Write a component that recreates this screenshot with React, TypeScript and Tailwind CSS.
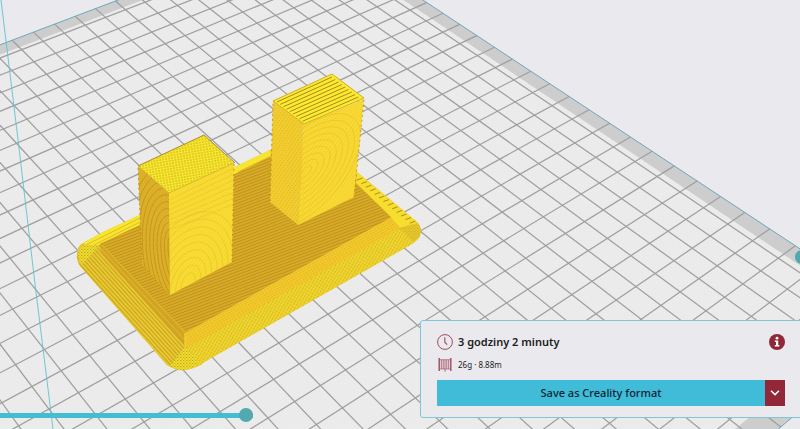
import React, { useState } from "react";

// perspective projection of the build plate, one unit per grid cell
const project = (u: number, v: number) => {
  const w = 1 - 0.0094 * u - 0.01209 * v;
  const x = (426.2 - 21 * u + 11.3 * v) / w;
  const y = (21 + 7.54 * u + 10.83 * v) / w;
  return `${x.toFixed(1)},${y.toFixed(1)}`;
};

const quad = (u1: number, v1: number, u2: number, v2: number) =>
  [project(u1, v1), project(u2, v1), project(u2, v2), project(u1, v2)].join(" ");

const range = (from: number, to: number) =>
  Array.from({ length: to - from + 1 }, (_, i) => from + i);

const BACK = -8.8;
const FRONT = 21.05;
const RIGHT = -1;
const LEFT = 30;

function BuildPlate() {
  return (
    <g>
      <polygon points={quad(RIGHT, BACK, LEFT, FRONT)} fill="#cdcdcd" />
      <polygon points={quad(-0.3, -8.2, LEFT, 20.3)} fill="#ececec" />
      <polygon points={quad(-0.3, -8.2, LEFT, 20.3)} fill="url(#plate)" />
      <g stroke="#9f9f9f" strokeWidth="1.25" fill="none">
        {range(0, 29).map((u) => (
          <polyline key={u} points={`${project(u, BACK)} ${project(u, FRONT)}`} />
        ))}
        {range(-8, 20).map((v) => (
          <polyline key={v} points={`${project(RIGHT, v)} ${project(LEFT, v)}`} />
        ))}
      </g>
      <polygon
        points={quad(RIGHT, BACK, LEFT, FRONT)}
        fill="none"
        stroke="#6aa9ba"
        strokeWidth="1"
      />
      <path d="M1 0 18.3 142 35 284 53 429" fill="none" stroke="#5fc3d0" strokeWidth="0.9" />
    </g>
  );
}

function Model() {
  return (
    <g>
      {/* base */}
      <path
        d="M77 254Q77 246 83 243L103 232 142 214 237 166 270 150 300 145 357 172 416 221Q424 229 419 238L412 244 206 361Q185 376 167 365L80 266Q77 261 77 254Z"
        fill="#e3c42b"
      />
      <path d="M77 254Q76 260 80 266L167 365Q176 371 185 370L185 345 100 245 85 244Z" fill="url(#leftSlope)" />
      <path d="M185 345 399 227 420 231Q422 238 412 244L206 361Q197 369 185 370Z" fill="url(#rightSlope)" />
      <path d="M83 243 103 232 142 214 237 166 270 150 272 160 237 176 142 224 100 244 92 250Z" fill="#f9e42e" />
      <path d="M86 245 142 217M90 247 142 221M238 172 271 156" stroke="#cfae22" strokeWidth="0.7" fill="none" />
      <path d="M78 255Q78 247 86 245L99 245 91 255 83 264Q78 261 78 255Z" fill="url(#corner)" />
      <path d="M100 244 142 224 237 173 272 156 330 155 358 180 392 217 185 333Z" fill="#d9ab26" />
      <path d="M100 244 142 224 237 173 272 156 330 155 358 180 392 217 185 333Z" fill="url(#floor)" />
      <path d="M100 244 185 333 185 346 101 253Z" fill="#d2a425" />
      <path d="M102 245 185 332M101 249 185 340" stroke="#e8c02c" strokeWidth="0.9" fill="none" />
      <path d="M185 333 392 217 399 229 185 349Z" fill="url(#ledge)" />
      <path d="M185 333 185 346" stroke="#f7d832" strokeWidth="1" />
      <path d="M185 347 200 362Q193 369 185 370 175 371 170 366Z" fill="url(#corner)" />
      <path d="M357 172 416 221 420 229 400 228 390 216 356 183Z" fill="#f7dd2d" />
      <g stroke="#a3871f" strokeWidth="0.9">
        {range(0, 12).map((i) => (
          <path key={i} d={`M${357 + i * 4.4} ${180 + i * 3.6}l5.5 -2`} />
        ))}
      </g>
      <path d="M399 228 418 223Q423 229 419 237L413 241Z" fill="#dfb92a" />
      <path d="M399 228 418 223Q423 229 419 237L413 241Z" fill="url(#corner)" opacity="0.4" />

      {/* left tower */}
      <path d="M138 166 169 193 170 295 142 264Z" fill="#dfb228" />
      <g clipPath="url(#towerLeft)" fill="none" stroke="#c3941f" strokeWidth="0.9">
        {range(0, 10).map((i) => (
          <ellipse key={i} cx="174" cy="258" rx={5 + i * 3.6} ry={22 + i * 7} transform="rotate(-9 174 258)" />
        ))}
      </g>
      <path d="M138 166 169 193 170 295 142 264Z" fill="url(#layers)" />
      <path d="M169 193 234 163 232 262 170 295Z" fill="#fadd33" />
      <g clipPath="url(#towerRight)" fill="none" stroke="#ebc72b" strokeWidth="0.7">
        {range(0, 8).map((i) => (
          <ellipse key={i} cx="188" cy="284" rx={6 + i * 5} ry={12 + i * 8} transform="rotate(22 188 284)" />
        ))}
        {range(0, 6).map((i) => (
          <path key={i} d={`M169 ${200 + i * 5}L234 ${168 + i * 6}`} />
        ))}
      </g>
      <path d="M169 193 234 163 232 262 170 295Z" fill="url(#layers)" opacity="0.4" />
      <path d="M138 166 204 135 234 163 169 193Z" fill="#fbe92d" />
      <path d="M138 166 204 135 234 163 169 193Z" fill="url(#dots)" />
      <path d="M138 166 204 135 235 163" fill="none" stroke="#ad8d25" strokeWidth="1" />
      <path d="M138 166 169 193 234 163" fill="none" stroke="#d2ad26" strokeWidth="0.8" />
      <path d="M234 164 232 262M138 168 142 262" stroke="#b58e20" strokeWidth="0.8" strokeDasharray="2 3" />

      {/* right tower */}
      <path d="M273 101 304 124 298 225 270 202Z" fill="#f5d02f" />
      <path d="M273 101 304 124 298 225 270 202Z" fill="url(#layers)" />
      <path d="M304 124 364 99 354 197 298 225Z" fill="#fadb33" />
      <g clipPath="url(#towerBack)" fill="none" stroke="#ecc62b" strokeWidth="0.7">
        {range(0, 8).map((i) => (
          <ellipse key={i} cx="306" cy="172" rx={3 + i * 4} ry={8 + i * 8} transform="rotate(42 306 172)" />
        ))}
      </g>
      <path d="M304 124 364 99 354 197 298 225Z" fill="url(#layers)" opacity="0.5" />
      <path d="M273 101 332 74 364 98 304 124Z" fill="#fdea30" />
      <g stroke="#98801d" strokeWidth="0.9">
        {range(0, 8).map((i) => (
          <path key={i} d={`M${277 + i * 3.2} ${102 + i * 2.4}L${332 + i * 3.3} ${77 + i * 2.5}`} />
        ))}
      </g>
      <path d="M273 101 332 74 364 98 304 124Z" fill="none" stroke="#d0ae25" strokeWidth="1" />
      <path d="M364 100 354 197M273 104 270 202" stroke="#b58e20" strokeWidth="0.8" strokeDasharray="2 3" />
    </g>
  );
}

function Scene() {
  return (
    <svg
      className="absolute inset-0 h-full w-full"
      viewBox="0 0 800 429"
      preserveAspectRatio="xMinYMin slice"
      aria-hidden="true"
    >
      <defs>
        <pattern id="plate" width="3" height="3" patternUnits="userSpaceOnUse">
          <path d="M0 0h1v1h-1zM1.5 1.5h1v1h-1z" fill="#e7e7e7" />
        </pattern>
        <pattern id="floor" width="4" height="2.8" patternUnits="userSpaceOnUse" patternTransform="rotate(-20)">
          <path d="M0 .5h4" stroke="#bb8e20" strokeWidth="0.9" />
        </pattern>
        <pattern id="layers" width="3" height="2" patternUnits="userSpaceOnUse" patternTransform="rotate(35)">
          <path d="M0 .5h1.5" stroke="#c39b25" strokeWidth="0.5" />
        </pattern>
        <pattern id="leftSlope" width="3" height="3" patternUnits="userSpaceOnUse" patternTransform="rotate(48)">
          <path d="M0 0h3v3h-3z" fill="#ebcb2e" />
          <path d="M0 .6h3" stroke="#c19e25" strokeWidth="1" />
        </pattern>
        <pattern id="rightSlope" width="3" height="2.8" patternUnits="userSpaceOnUse" patternTransform="rotate(-60)">
          <path d="M0 0h3v3h-3z" fill="#f0d62d" />
          <path d="M0 .6h2.2" stroke="#ceaf25" strokeWidth="0.9" />
        </pattern>
        <pattern id="ledge" width="3" height="2.4" patternUnits="userSpaceOnUse" patternTransform="rotate(-29)">
          <path d="M0 0h3v3h-3z" fill="#f3ca2b" />
          <path d="M0 .5h2" stroke="#dfae26" strokeWidth="0.8" />
        </pattern>
        <pattern id="dots" width="3" height="2.6" patternUnits="userSpaceOnUse" patternTransform="rotate(-10)">
          <path d="M.3 .4h1.5v.9h-1.5z" fill="#a8911d" />
        </pattern>
        <pattern id="corner" width="3" height="3" patternUnits="userSpaceOnUse">
          <path d="M0 0h3v3h-3z" fill="#f1de2d" />
          <path d="M0 0h1.3v1h-1.3zM1.5 1.5h1.1v1h-1.1z" fill="#bfa322" />
        </pattern>
        <clipPath id="towerLeft">
          <path d="M138 166 169 193 170 295 142 264Z" />
        </clipPath>
        <clipPath id="towerRight">
          <path d="M169 193 234 163 232 262 170 295Z" />
        </clipPath>
        <clipPath id="towerBack">
          <path d="M304 124 364 99 354 197 298 225Z" />
        </clipPath>
      </defs>
      <BuildPlate />
      <Model />
    </svg>
  );
}

function ClockIcon() {
  return (
    <svg className="size-4" viewBox="0 0 16 16" fill="none" stroke="#a04a5c" aria-hidden="true">
      <circle cx="8" cy="8" r="7.4" strokeWidth="1" />
      <path d="M7.8 3.2V8.2L10.2 10.6" strokeWidth="1.1" />
    </svg>
  );
}

function SpoolIcon() {
  return (
    <svg className="size-4" viewBox="0 0 16 16" fill="none" stroke="#a04a5c" aria-hidden="true">
      <path d="M2.2 1V14M13.8 1V14" strokeWidth="1.4" />
      <path d="M4.3 2.7V12M6.2 2.7V12M8 2.7V14.8M9.8 2.7V12M11.7 2.7V12" strokeWidth="0.8" />
      <path d="M3 2.7H13M3 12H13" strokeWidth="0.6" />
    </svg>
  );
}

function PrintCard() {
  return (
    <section className="absolute -right-1 bottom-[11px] w-96 rounded-[3px] border border-[#7cc8d3] bg-[#eaeaee] pt-[13px] pr-[18px] pb-[11px] pl-4 text-[#1c1c22]">
      <div className="flex h-4 items-center gap-[5px]">
        <ClockIcon />
        <h2 className="text-[11px] leading-4 font-semibold">3 godziny 2 minuty</h2>
        <button type="button" aria-label="Info" className="ml-auto size-4 cursor-pointer">
          <svg className="size-4" viewBox="0 0 16 16" aria-hidden="true">
            <circle cx="8" cy="8" r="8" fill="#922739" />
            <circle cx="8" cy="4.2" r="1.4" fill="#fff" />
            <path d="M5.8 6.6H9.2V11H10.3V12.4H5.8V11H7V8H5.8Z" fill="#fff" />
          </svg>
        </button>
      </div>
      <div className="mt-[7px] flex h-4 items-center gap-[5px]">
        <SpoolIcon />
        <p className="text-[8px] leading-4">26g · 8.88m</p>
      </div>
      <div className="mt-[7px] flex h-[26px]">
        <button
          type="button"
          className="flex-1 cursor-pointer bg-[#40bcd8] text-[11px] font-medium text-[#0d2533]"
        >
          Save as Creality format
        </button>
        <button
          type="button"
          aria-label="More formats"
          className="flex w-5 cursor-pointer items-center justify-center bg-[#922739]"
        >
          <svg className="h-2 w-2.5" viewBox="0 0 10 8" fill="none" stroke="#fff" strokeWidth="1.5" aria-hidden="true">
            <path d="M1 1.8 5 5.6 9 1.8" />
          </svg>
        </button>
      </div>
    </section>
  );
}

function App() {
  const [step, setStep] = useState(100);

  return (
    <main className="relative min-h-screen w-full overflow-hidden bg-[#eaeaee] font-['Noto_Sans',sans-serif]">
      <Scene />
      <input
        type="range"
        aria-label="Simulation step"
        value={step}
        onChange={(e) => setStep(Number(e.target.value))}
        className="absolute bottom-[7px] left-0 h-3.5 w-[253px] cursor-pointer appearance-none bg-transparent [&::-webkit-slider-runnable-track]:h-[5px] [&::-webkit-slider-runnable-track]:bg-[#43bdd2] [&::-webkit-slider-thumb]:-mt-[5px] [&::-webkit-slider-thumb]:size-3.5 [&::-webkit-slider-thumb]:appearance-none [&::-webkit-slider-thumb]:rounded-full [&::-webkit-slider-thumb]:bg-[#52a9b0]"
      />
      <button
        type="button"
        aria-label="Layer"
        className="absolute top-3/5 -right-[9px] size-3.5 -translate-y-1/2 cursor-pointer rounded-full bg-[#4fa9b0]"
      />
      <PrintCard />
    </main>
  );
}

export default App;
